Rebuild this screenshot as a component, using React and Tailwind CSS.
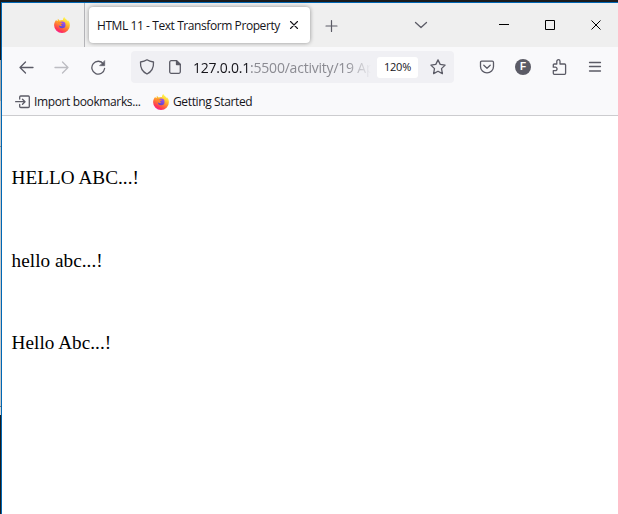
function Icon({ children, className = "text-[#5b5b66]", size = 16 }) {
  return (
    <svg
      width={size}
      height={size}
      viewBox={`0 0 ${size} ${size}`}
      fill="none"
      stroke="currentColor"
      strokeWidth="1.3"
      strokeLinecap="round"
      strokeLinejoin="round"
      className={`shrink-0 ${className}`}
    >
      {children}
    </svg>
  );
}

function Firefox() {
  return (
    <svg width="16" height="16" viewBox="0 0 16 16" className="shrink-0">
      <defs>
        <linearGradient id="flame" x1="0.8" y1="0.05" x2="0.3" y2="1">
          <stop offset="0.1" stopColor="#fff04a" />
          <stop offset="0.38" stopColor="#ffb52b" />
          <stop offset="0.62" stopColor="#ff7139" />
          <stop offset="0.85" stopColor="#ff3457" />
          <stop offset="1" stopColor="#f5209b" />
        </linearGradient>
        <linearGradient id="globe" x1="0.7" y1="0" x2="0.3" y2="1">
          <stop offset="0" stopColor="#a452f0" />
          <stop offset="1" stopColor="#5b45c9" />
        </linearGradient>
      </defs>
      <path
        d="M10.2 0c-.9.800-1.300 2-1.200 3C7.600 2.800 6.300 3 5.500 3.500L3.900 1.800c-.3.800-.2 1.500 0 2.200L1.900 3.200C.7 4.800.1 6.500.1 8.200a7.900 7.700 0 0 0 15.800 0c0-2.100-.7-3.800-1.900-4.900l.2 1.100C13.200 2.700 11 2 10.200 0z"
        fill="url(#flame)"
      />
      <circle cx="8.200" cy="7.900" r="3.300" fill="url(#globe)" />
      <path d="M3.800 5c1.200-.4 2.300-.1 3 .6l2 .3c0 .8-1.600 1-1.900 1.300-.1.700.3 1.200 1.300 1.200-1.100 1-2.700.5-3.300-.5-.5-1-.5-1.900-1.100-2.900z" fill="#ff8a2b" />
    </svg>
  );
}

function TabStrip() {
  return (
    <div className="flex h-11 shrink-0 bg-[#efefef]">
      <div className="flex w-[83px] shrink-0 items-center border-r border-[#b4b4b8] pl-[52px]">
        <Firefox />
      </div>
      <div className="ml-1 mt-1 flex h-9 w-[221px] shrink-0 items-center rounded bg-white pl-2 shadow-[0_0_4px_rgba(0,0,0,0.4)]">
        <span className="w-48 shrink-0 whitespace-nowrap pt-px font-['Open_Sans',sans-serif] text-[12px] tracking-[-0.42px] text-[#15141a]">
          HTML 11 - Text Transform Property
        </span>
        <Icon size={10} className="text-[#15141a]">
          <path d="M1.500 1.500l7 7M8.500 1.500l-7 7" strokeWidth="1.100" />
        </Icon>
      </div>
      <Icon size={14} className="ml-[14px] mt-4 text-[#5b5b66]">
        <path d="M7.500 1.500v11M2 7h11" strokeWidth="1.200" />
      </Icon>
      <Icon size={14} className="ml-[76px] mt-[15px] text-[#5b5b66]">
        <path d="M1.500 4.500L7 9.500l5.500-5" />
      </Icon>
      <div className="ml-auto flex w-[137px] text-black">
        {[
          <path key="min" d="M3 8.500h10" />,
          <path key="max" d="M3.500 4.500h9v9h-9z" />,
          <path key="close" d="M3.500 4.500l9 9M12.500 4.500l-9 9" />,
        ].map((glyph, i) => (
          <div key={i} className="flex w-[46px] shrink-0 pl-[15px] pt-[13px]">
            <svg width="16" height="16" viewBox="0 0 16 16" fill="none" stroke="currentColor" strokeWidth="1">
              {glyph}
            </svg>
          </div>
        ))}
      </div>
    </div>
  );
}

function Toolbar() {
  return (
    <div className="flex h-10 shrink-0 items-center bg-[#f9f9fb] pl-4 font-['Open_Sans',sans-serif]">
      <Icon>
        <path d="M15 8.500H2M7.500 3L2 8.500 7.500 14" />
      </Icon>
      <Icon className="ml-5 text-[#bdbdc2]">
        <path d="M1 8.500h13M8.500 3L14 8.500 8.500 14" />
      </Icon>
      <Icon className="ml-5 text-[#5b5b66]">
        <path d="M13.500 5A6.400 6.400 0 1 0 14.600 9.500" />
        <path d="M14.700 1.900v4.800H9.900z" fill="currentColor" strokeWidth="0.600" />
      </Icon>
      <div className="ml-[25px] flex h-8 w-[323px] shrink-0 items-center rounded bg-[#f0f0f4] pl-2">
        <Icon>
          <path d="M8 .8c2 1.400 4 1.900 6.500 2.200.3 5-1.500 9.600-6.500 12C3 12.600 1.200 8 1.500 3 4 2.700 6 2.200 8 .8z" />
        </Icon>
        <Icon className="ml-3 text-[#5b5b66]">
          <path d="M9.500 1.700H4.200a1.500 1.500 0 0 0-1.500 1.500v9.600a1.500 1.500 0 0 0 1.500 1.500h7.600a1.500 1.500 0 0 0 1.500-1.500V5.500z" />
          <path d="M9.500 1.700v3.800h3.800z" fill="currentColor" />
        </Icon>
        <div className="ml-[10px] w-[178px] shrink-0 overflow-hidden whitespace-nowrap pt-px text-[14px] tracking-[-0.220px] text-[#8b8b92] [mask-image:linear-gradient(to_right,black_86%,transparent)]">
          <span className="text-[#15141a]">127.0.0.1</span>:5500/activity/19 Ap
        </div>
        <div className="ml-[6px] flex h-[21px] w-[41px] shrink-0 items-center justify-center rounded-[3px] bg-white pt-px text-[11px] tracking-[-0.2px] text-[#15141a]">
          120%
        </div>
        <Icon className="ml-3 text-[#5b5b66]">
          <path d="M8 .9l2.200 4.500 4.900.7-3.600 3.500.9 5L8 12.200l-4.400 2.400.9-5L.9 6.100l4.900-.7z" />
        </Icon>
      </div>
      <Icon className="ml-[25px] text-[#5b5b66]">
        <path d="M2.700 2.200h10.600a1.200 1.200 0 0 1 1.200 1.200v4a6.500 6.500 0 0 1-13 0v-4a1.200 1.200 0 0 1 1.200-1.200z" />
        <path d="M4.800 6.300L8 9.300l3.200-3" />
      </Icon>
      <div className="ml-5 flex size-4 shrink-0 items-center justify-center rounded-full bg-[#5b5b66] font-['Liberation_Sans',sans-serif] text-[10px] font-bold leading-none text-white">
        F
      </div>
      <Icon className="ml-5 text-[#5b5b66]">
        <path d="M2.300 8.200V6a1 1 0 0 1 1-1h2.500V2.300a1.600 1.600 0 0 1 3.200 0V5h4.600a1 1 0 0 1 1 1v8.300a1 1 0 0 1-1 1H3.300a1 1 0 0 1-1-1v-2.600h2a1.750 1.750 0 0 0 0-3.500z" />
      </Icon>
      <Icon className="ml-5 text-[#5b5b66]">
        <path d="M2.500 3.500h11M2.500 7.500h11M2.500 12h11" strokeWidth="1.300" />
      </Icon>
    </div>
  );
}

function Bookmarks() {
  return (
    <div className="flex h-[29px] shrink-0 items-center whitespace-nowrap border-b border-[#cccccf] bg-[#f9f9fb] pl-[13px] pt-px font-['Open_Sans',sans-serif] text-[12px] tracking-[-0.370px] text-[#15141a]">
      <Icon>
        <path d="M4.700 5V3a1 1 0 0 1 1-1h7.600a1 1 0 0 1 1 1v9.500a1 1 0 0 1-1 1H5.700a1 1 0 0 1-1-1v-2M.6 7.700h9.200M7.500 5.200L10 7.700l-2.500 2.500" />
      </Icon>
      <span className="ml-[3px] w-[119px] shrink-0 pt-px">Import bookmarks...</span>
      <Firefox />
      <span className="ml-1 pt-px">Getting Started</span>
    </div>
  );
}

export default function App() {
  return (
    <div className="flex h-[514px] w-[618px] flex-col overflow-hidden bg-[#1b1b1d]">
      <div className="h-[2px] shrink-0" />
      <div className="flex min-h-0 flex-1">
        <div className="flex w-px shrink-0 flex-col">
          <div className="h-[58px]" />
          <div className="h-[41px] bg-[#a5a5a5]" />
          <div className="h-[45px] bg-[#c8c8c8]" />
          <div className="h-px bg-[#8a8a8a]" />
          <div className="h-[259px] bg-[#c8c8c8]" />
          <div className="h-px bg-[#777777]" />
          <div className="h-2 bg-[#d6d6d6]" />
        </div>
        <div className="flex min-w-0 flex-1 flex-col border-l border-t border-[#0067b4] bg-white">
          <TabStrip />
          <Toolbar />
          <Bookmarks />
          <main className="flex flex-col gap-[60.600px] pl-[9.600px] pt-[51px] font-['Liberation_Serif',serif] text-[19.200px] leading-[22px] tracking-[0.040px] text-black">
            <p className="uppercase">Hello Abc...!</p>
            <p className="lowercase">Hello Abc...!</p>
            <p className="capitalize">Hello Abc...!</p>
          </main>
        </div>
      </div>
    </div>
  );
}
